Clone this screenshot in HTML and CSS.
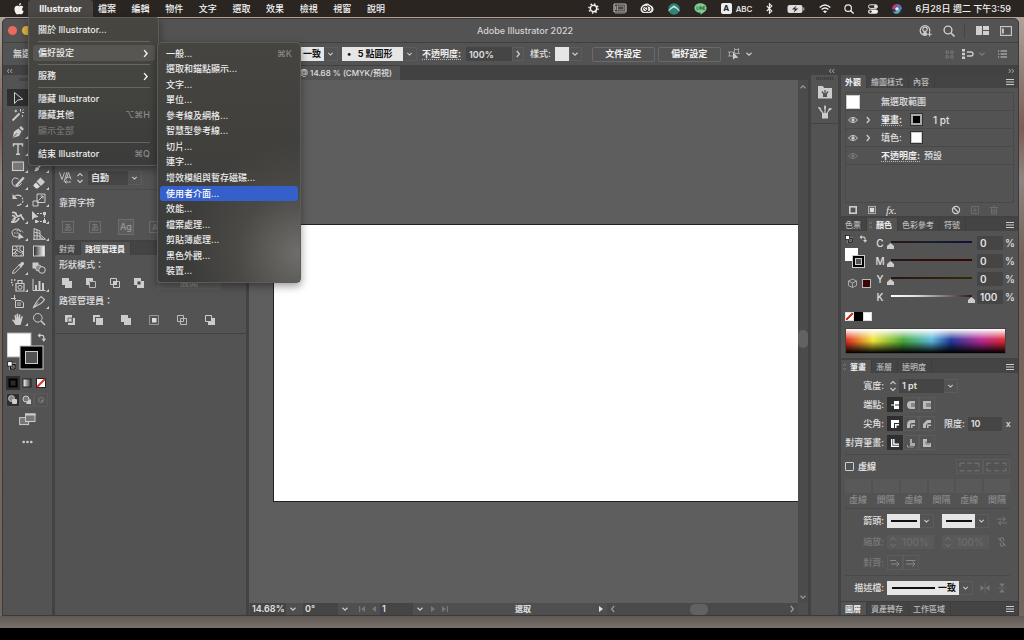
FILE: index.html
```html
<!DOCTYPE html>
<html lang="zh-Hant">
<head>
<meta charset="utf-8">
<title>Adobe Illustrator 2022</title>
<link rel="stylesheet" href="styles.css">
</head>
<body>
<svg class="defs" aria-hidden="true">
  <symbol id="chev" viewBox="0 0 8 8"><path d="M1.5 2.8 4 5.2 6.5 2.8" fill="none" stroke="currentColor" stroke-width="1.2"/></symbol>
  <symbol id="right" viewBox="0 0 8 8"><path d="M2.8 1 5.4 4 2.8 7" fill="none" stroke="currentColor" stroke-width="1.3"/></symbol>
  <symbol id="left" viewBox="0 0 8 8"><path d="M5.2 1 2.6 4 5.2 7" fill="none" stroke="currentColor" stroke-width="1.2"/></symbol>
  <symbol id="up" viewBox="0 0 8 8"><path d="M1.5 5.2 4 2.8 6.5 5.2" fill="none" stroke="currentColor" stroke-width="1.2"/></symbol>
  <symbol id="spin" viewBox="0 0 8 12"><path d="M1.5 4 4 1.6 6.5 4M1.5 8 4 10.4 6.5 8" fill="none" stroke="currentColor" stroke-width="1.1"/></symbol>
  <symbol id="dleft" viewBox="0 0 8 6"><path d="M3.2 1 1.4 3l1.8 2M6.2 1 4.4 3l1.8 2" fill="none" stroke="currentColor"/></symbol>
  <symbol id="dright" viewBox="0 0 8 6"><path d="M1.8 1l1.8 2-1.8 2M4.8 1l1.8 2-1.8 2" fill="none" stroke="currentColor"/></symbol>
  <symbol id="burger" viewBox="0 0 8 8"><path d="M0 1.5h8M0 4h8M0 6.5h8" stroke="currentColor" stroke-width="1"/></symbol>
  <symbol id="search" viewBox="0 0 12 12"><circle cx="5" cy="5" r="3.9" fill="none" stroke="currentColor" stroke-width="1.4"/><path d="M7.8 7.8 11.5 11.5" stroke="currentColor" stroke-width="1.6"/></symbol>
  <symbol id="swap" viewBox="0 0 10 10"><path d="M3 2.7h2.6q2 0 2 2V7" fill="none" stroke="currentColor" stroke-width="1.4"/><path d="M3.6 0v5.4L.6 2.7zM5 6.4h5.2L7.6 9.6z" fill="currentColor"/></symbol>
  <symbol id="defcol" viewBox="0 0 10 10"><rect x="4" y="4" width="5" height="5" fill="none" stroke="#ccc" stroke-width="2.6"/><rect x="4" y="4" width="5" height="5" fill="none" stroke="#000" stroke-width="1.4"/><rect x=".7" y=".7" width="5" height="5" fill="#fff" stroke="#222"/></symbol>
  <symbol id="eye" viewBox="0 0 10 8"><path d="M.5 4Q5-1.2 9.500 4 5 9.200.5 4z" fill="none" stroke="currentColor"/><circle cx="5" cy="4" r="1.7" fill="currentColor"/></symbol>
  <symbol id="prev" viewBox="0 0 8 8"><path d="M6 1v6L2 4z" fill="currentColor"/></symbol>
  <symbol id="next" viewBox="0 0 8 8"><path d="M2 1v6l4-3z" fill="currentColor"/></symbol>
  <symbol id="first" viewBox="0 0 8 8"><path d="M7 1v6L3 4zM1 1h1.200v6H1z" fill="currentColor"/></symbol>
  <symbol id="last" viewBox="0 0 8 8"><path d="M1 1v6l4-3zM5.800 1H7v6H5.800z" fill="currentColor"/></symbol>
  <symbol id="brushes" viewBox="0 0 14 14"><path d="M4 8h6v5.500H4z" fill="currentColor"/><path d="M5 8 2 4.500M7 8V2M9 8l2.500-3.500" stroke="currentColor" stroke-width="1.200"/><path d="M0 2q3-.5 3.400 3Q.8 5 0 2zM7 0q2 2 0 4.500Q5 2 7 0zM10.200 5.500Q10.500 2 14 3.500 13 6 10.200 5.500z" fill="currentColor"/></symbol>
</svg>

<header class="menubar">
  <button class="apple" aria-label="Apple"><svg width="10" height="12" viewBox="0 0 10 12"><path d="M5 3.200C4 2.700 3.400 2.600 2.700 2.800.9 3.300.2 5 .5 7c.3 2 1.500 4.400 2.900 4.400.7 0 1-.4 1.800-.4s1.100.4 1.800.4c1.200 0 2.200-1.700 2.600-2.900C7.700 7.500 7.700 5 9.300 4.100 8.600 3 7.300 2.500 6.200 2.900c-.5.1-.8.3-1.200.3zM4.900 2.600C4.800 1.300 5.800.2 7 .1 7.200 1.400 6.200 2.600 4.900 2.600z" fill="#f2f2f2"/></svg></button>
  <button class="app-name">Illustrator</button>
  <nav class="menus">
    <button>檔案</button><button>編輯</button><button>物件</button><button>文字</button><button>選取</button><button>效果</button><button>檢視</button><button>視窗</button><button>說明</button>
  </nav>
  <div class="status-items">
    <svg width="11" height="11" viewBox="0 0 12 12"><circle cx="6" cy="6" r="3.500" fill="none" stroke="#f2f2f2" stroke-width="1.600"/><circle cx="6" cy="6" r="5" fill="none" stroke="#f2f2f2" stroke-width="1.600" stroke-dasharray="1.600 2.327"/></svg>
    <svg width="14" height="11" viewBox="0 0 14 11"><rect x="1" y="1" width="12" height="8" rx="1" fill="#3a3634" stroke="#bbb" stroke-width="1.200"/><rect x="4.500" y="3" width="6.500" height="4" fill="#4a4644" stroke="#aaa" stroke-width=".8"/><path d="M2.800 3v4" stroke="#bbb"/><path d="M2 10.300h10" stroke="#888" stroke-width=".7"/></svg>
    <svg width="14" height="11" viewBox="0 0 14 11"><path d="M4 1.500Q7-.6 10 2q4 1.500 3.500 5Q12.500 10.300 9 10H4Q.6 9.500.5 6.200.7 3 4 1.500z" fill="#eee"/><circle cx="5.200" cy="6" r="2.700" fill="none" stroke="#2b2522" stroke-width="1"/><path d="M5 4.500Q7 2 9.500 3.300q2.200 1.500 1.300 4-1.600 2.200-3.600.7L4.500 5.300" fill="none" stroke="#2b2522" stroke-width="1"/></svg>
    <svg width="12" height="12" viewBox="0 0 12 12"><circle cx="6" cy="6" r="5.800" fill="#2f8577"/><path d="M.6 8Q3 5.500 6 4q3 1.500 5.400 4Q10 5 6 2.800 2 5 .6 8z" fill="#e8f4f0" stroke="#e8f4f0" stroke-width=".5"/></svg>
    <svg width="13" height="12" viewBox="0 0 13 12"><path d="M6.500.3C10 .3 12.600 2.500 12.600 5c0 2.800-3.300 5-6.100 6.800V9.800C3 9.700.4 7.700.4 5S3 .3 6.500.3z" fill="#80c992"/><path d="M3 3.500v3h1.300M5.300 3.500v3M6.500 6.500v-3l1.700 3v-3M11 3.500H9.500v3H11M9.500 5H11" fill="none" stroke="#2b5a39" stroke-width=".7"/></svg>
    <span class="ime"><b>A</b>ABC</span>
    <svg width="7" height="11" viewBox="0 0 7 11"><path d="M.8 3 5.800 8 3.400 10.300V.7L5.800 3 .8 8" fill="none" stroke="#eee" stroke-width="1.100"/></svg>
    <svg width="18" height="10" viewBox="0 0 18 10"><rect x=".5" y="1" width="15" height="8" rx="2" fill="#ddd"/><path d="M16.800 3.500v3" stroke="#bbb"/><path d="M9.500 1.500 5 5.500h3L6.500 8.700 11.200 4.500H8z" fill="#2b2522"/></svg>
    <svg width="12" height="10" viewBox="0 0 12 10"><path d="M.7 3.600Q6-1.400 11.300 3.600M2.600 5.600q3.400-3 6.800 0" fill="none" stroke="#f2f2f2" stroke-width="1.400"/><path d="M4 7.200q2-1.600 4 0L6 9.300z" fill="#f2f2f2"/></svg>
    <svg width="10" height="10" class="light"><use href="#search"/></svg>
    <svg width="10" height="10" viewBox="0 0 10 10"><rect x=".5" y=".8" width="9" height="3.600" rx="1.800" fill="none" stroke="#eee" stroke-width="1"/><circle cx="7.500" cy="2.600" r="1.500" fill="#eee"/><rect x="0" y="5.400" width="10" height="4.400" rx="2.200" fill="#eee"/><circle cx="2.500" cy="7.600" r="1.200" fill="#2b2522"/></svg>
    <svg width="10" height="10" viewBox="0 0 10 10"><circle cx="5" cy="5" r="5" fill="#3b3560"/><path d="M5 0a5 5 0 0 1 5 5L5 5.500z" fill="#4b78b8"/><path d="M0 5a5 5 0 0 1 5-5l.5 5.500z" fill="#b3426a"/><path d="M1 8q4 0 8-4-1 6-5 5.800Q2 9.600 1 8z" fill="#4bb3b5"/><circle cx="5" cy="5" r="1.800" fill="#e9e6f2"/></svg>
    <time>6月28日 週二 下午3:59</time>
  </div>
</header>

<main class="window">
  <div class="titlebar">
    <div class="lights"><i class="red"></i><i class="yellow"></i></div>
    <h1>Adobe Illustrator 2022</h1>
    <div class="title-tools">
      <button aria-label="帳號"><svg width="13" height="12" viewBox="0 0 13 12"><circle cx="6" cy="5.500" r="4.800" fill="none" stroke="#ccc" stroke-width="1.300"/><circle cx="6" cy="4.300" r="2.200" fill="none" stroke="#ccc" stroke-width="1.200"/><path d="M3 8.800Q5.300 8 4.900 6.500h2.200Q6.800 8 9 8.800L6 10.500z" fill="#ccc"/><path d="M8.200 6.800H13V12H8.200z" fill="#535353"/><path d="M10.500 7v4.600M8.200 9.300h4.600" stroke="#ccc" stroke-width="1.100"/></svg></button>
      <button aria-label="搜尋"><svg width="12" height="12"><use href="#search"/></svg></button>
      <i class="bar"></i>
      <button aria-label="排列文件"><svg width="13" height="9" viewBox="0 0 13 9"><path d="M0 0h6v9H0zM7 0h6v4H7zM7 5h6v4H7z" fill="#d0d0d0"/></svg></button>
      <button aria-label="工作區"><svg width="12" height="10" viewBox="0 0 12 10"><rect x=".6" y=".6" width="10.800" height="8.800" fill="none" stroke="#ccc" stroke-width="1.100"/><path d="M2 2.500h1.800v5H2z" fill="#ccc"/></svg></button>
    </div>
  </div>

  <div class="control">
    <span class="selection">無選</span>
    <div class="combo white profile"><select aria-label="變數寬度描述檔"><option>一致</option></select><svg><use href="#chev"/></svg></div>
    <div class="combo white brush"><select aria-label="筆刷"><option>•&nbsp;&nbsp; 5 點圓形</option></select><svg><use href="#chev"/></svg></div>
    <div class="opacity"><label class="dotted" for="op">不透明度:</label><input id="op" value="100%"><button aria-label="更多"><svg width="8" height="8"><use href="#right"/></svg></button></div>
    <div class="style-pick">樣式:<button class="sw" aria-label="樣式"></button><button class="drop" aria-label="樣式選單"><svg width="8" height="8"><use href="#chev"/></svg></button></div>
    <button class="outlined">文件設定</button>
    <button class="outlined">偏好設定</button>
    <button class="similar" aria-label="選取類似"><svg width="12" height="12" viewBox="0 0 12 12"><path d="M6.500 1.500h4v4h-4zM1.500 4h4v4h-4zM0 4h1.500M0 8h1.500M6.500 0v1.500M10.500 0v1.500M10.500 5.500H12" fill="none" stroke="#aaa" stroke-width=".9"/><path d="M5 4v7.700L6.800 10l3.600-.3z" fill="#ccc"/></svg><svg width="8" height="8"><use href="#chev"/></svg></button>
    <div class="control-end">
      <svg width="9" height="9" viewBox="0 0 9 9"><path d="M1 1h2.300v2.300H1zM5.700 1H8v2.300H5.700zM1 5.700h2.300V8H1zM5.700 5.700H8V8H5.700z" fill="none" stroke="#777"/></svg>
      <button aria-label="對齊至"><svg width="12" height="10" viewBox="0 0 12 10"><path d="M0 0h3v2.500H0zM0 3.700h3v2.500H0zM0 7.400h3V10H0z" fill="#ccc"/><path d="M5 3h4q2 0 2 2t-2 2H5" fill="none" stroke="#ccc" stroke-width="1.300"/></svg><svg width="8" height="8" class="dim"><use href="#chev"/></svg></button>
      <button aria-label="面板選單"><svg width="9" height="8" viewBox="0 0 9 8"><path d="M2.500 1H9M2.500 4H9M2.500 7H9M0 1h1.200M0 4h1.200M0 7h1.200" stroke="#ccc"/></svg></button>
    </div>
  </div>

  <div class="work">
    <aside class="tools">
      <div class="strip"><svg width="8" height="6"><use href="#dleft"/></svg></div>
      <div class="grip"></div>
      <div class="tool-grid">
        <button class="on" aria-label="選取"><svg viewBox="0 0 14 14"><path d="M3.500 1.500v11L6.800 9l5-.7z" fill="none" stroke="currentColor"/></svg></button>
        <button aria-label="直接選取"><svg viewBox="0 0 14 14"><path d="M4 2v10l3-3 4-.5z" fill="currentColor"/></svg></button>
        <button aria-label="魔術棒"><svg viewBox="0 0 14 14"><path d="M1.500 12.500 8.500 5.500" stroke="currentColor" stroke-width="1.800"/><path d="M9.500 1v2.600M13 4.500h-2M3.500 3h2.600M4.800 1.700v2.600M11.500 7v2M12.500 1.500 11.300 2.700" stroke="currentColor"/></svg></button>
        <button aria-label="套索"><svg viewBox="0 0 14 14"><ellipse cx="7" cy="6" rx="5" ry="3.500" fill="none" stroke="currentColor"/></svg></button>
        <button class="more" aria-label="鋼筆"><svg viewBox="0 0 14 14"><path d="M1.500 13 3 6.500 7.500 3.500l3 3L8 11zM8.300 2.700 10 1l3 3-1.700 1.700z" fill="currentColor"/><path d="M1.500 13 6 8.300" stroke="#535353"/></svg></button>
        <button aria-label="曲線"><svg viewBox="0 0 14 14"><path d="M2 12Q4 2 12 4" fill="none" stroke="currentColor"/></svg></button>
        <button class="more" aria-label="文字"><svg viewBox="0 0 14 14"><path d="M2.500 4.500V2h9v2.500M7 2v10.300M5 12.300h4" fill="none" stroke="currentColor" stroke-width="1.400"/></svg></button>
        <button aria-label="線段"><svg viewBox="0 0 14 14"><path d="M2 12 12 2" stroke="currentColor"/></svg></button>
        <button class="more" aria-label="矩形"><svg viewBox="0 0 14 14"><rect x="1.500" y="3" width="11" height="8.500" fill="#777" stroke="currentColor" stroke-width="1.100"/></svg></button>
        <button class="more" aria-label="繪圖筆刷"><svg viewBox="0 0 14 14"><path d="M12.500 1 6 7.500 7.500 9z" fill="currentColor"/><path d="M5.500 8q2 .5 1.500 2.500-2 2.500-5 1.500 1.800-1 1.500-3 .7-1 2-1z" fill="currentColor"/></svg></button>
        <button class="more" aria-label="形狀繪圖"><svg viewBox="0 0 14 14"><path d="M7.500 3.200Q2-.3 1 5.500q.3 5.800 6 4.800 2.500-1 3.500-3" fill="none" stroke="currentColor"/><path d="M12.800 1.500 6.800 8 5 9.800" stroke="currentColor" stroke-width="2.400"/></svg></button>
        <button class="more" aria-label="橡皮擦"><svg viewBox="0 0 14 14"><path d="M8.500 1.500 13 6l-4 4-4.500-4.500z" fill="currentColor"/><path d="M4 6.500 8 10.500 5.500 12.500H4L1.500 10V9z" fill="#ddd"/></svg></button>
        <button class="more" aria-label="旋轉"><svg viewBox="0 0 14 14"><path d="M3 3.500Q6 1 9.500 2.800q3.500 3 2 6.700-2 3-5.500 3" fill="none" stroke="currentColor" stroke-width="1.200" stroke-dasharray="8 1.300 2 1.300 2 1.300"/><path d="M1.500 1v5h5z" fill="currentColor"/></svg></button>
        <button class="more" aria-label="縮放"><svg viewBox="0 0 14 14"><path d="M1 8h5v5H1zM5 1h8v8.500H5zM6.500 7.500 11 3M8.500 3H11v2.500" fill="none" stroke="currentColor"/></svg></button>
        <button class="more" aria-label="寬度"><svg viewBox="0 0 14 14"><path d="M1 2.500Q5 2 5.500 5q1.500 2.500 4 0l3.500 5M1 5.500q3 0 3 2.500T.5 12Q6 13 8 8" fill="none" stroke="currentColor" stroke-width="1.700"/><path d="M1 9.500 11 4.500" stroke="currentColor"/></svg></button>
        <button class="more" aria-label="任意變形"><svg viewBox="0 0 14 14"><path d="M5 3.500h7.500v8H3" fill="none" stroke="currentColor" stroke-dasharray="2 1"/><path d="M0 1v9l2.500-2.300L6.500 7zM11 2h3v3h-3zM11 10h3v3h-3zM3 10h2.500v3H3z" fill="currentColor"/></svg></button>
        <button class="more" aria-label="形狀建立程式"><svg viewBox="0 0 14 14"><path d="M9.500 5Q9 1.500 5.500 2 1 2.500 1 6t4 4h3" fill="none" stroke="currentColor"/><path d="M3 6h5M5.500 4Q11 2.500 12.500 6" fill="none" stroke="currentColor" stroke-dasharray="1.500 1"/><path d="M7.500 5.500v7.500l2-1.800 3.500-.4z" fill="currentColor"/></svg></button>
        <button class="more" aria-label="透視格點"><svg viewBox="0 0 14 14"><path d="M2 1.500v11M2 1.500l6 2.500v8M2 5l6 1.500M2 8.800l6 .2M5 2.500V12M1 12.300h12.500L8 7.500M8 10l3 2" fill="none" stroke="currentColor"/></svg></button>
        <button aria-label="網格"><svg viewBox="0 0 14 14"><path d="M1.500 2h11v10h-11zM1.500 6q3.500-2 5.500 1t5.500 0M5 2q3 3 0 5t1 5M9.500 2q-2 4 1 5t-1 5M1.500 10q3-3 5 0" fill="none" stroke="currentColor"/></svg></button>
        <button aria-label="漸層"><svg viewBox="0 0 14 14"><defs><linearGradient id="g1"><stop stop-color="#222"/><stop offset="1" stop-color="#fff"/></linearGradient></defs><rect x="1.500" y="2" width="11" height="10" fill="url(#g1)" stroke="currentColor"/></svg></button>
        <button class="more" aria-label="檢色滴管"><svg viewBox="0 0 14 14"><path d="M1.500 12.500 2.200 10 8 4.200l1.800 1.800L4 11.800z" fill="none" stroke="currentColor"/><path d="M7 3 8.500 3.200 11 .8q2 0 2.200 2.200L10.800 5.500 11 7z" fill="currentColor"/></svg></button>
        <button aria-label="漸變"><svg viewBox="0 0 14 14"><path d="M.5 1.500h6v6h-6z" fill="currentColor"/><circle cx="6.500" cy="7" r="3" fill="#888" stroke="currentColor"/><circle cx="10" cy="9" r="3.300" fill="#535353" stroke="currentColor"/></svg></button>
        <button class="more" aria-label="符號噴灑器"><svg viewBox="0 0 14 14"><path d="M0 2h1.500M3 2h1.500M0 4.500h1.500M1 7h1.200" stroke="currentColor" stroke-width="1.300"/><path d="M5 5.500h8v7.500H5zM7 5.500V2.500h4v3" fill="none" stroke="currentColor" stroke-width="1.200"/><circle cx="9" cy="9.300" r="2" fill="none" stroke="currentColor"/></svg></button>
        <button class="more" aria-label="長條圖"><svg viewBox="0 0 14 14"><path d="M1 1v11.500h12.500" fill="none" stroke="currentColor"/><path d="M3 7h2v5H3zM6.500 3h2v9h-2zM10 5h2v7h-2z" fill="currentColor"/></svg></button>
        <button aria-label="工作區域"><svg viewBox="0 0 14 14"><path d="M3.500 0v5M0 3.500h5M4.500 5.500H10L12.500 8v4.500h-8z" fill="none" stroke="currentColor"/><path d="M6 7h4v4H6z" fill="#888"/></svg></button>
        <button class="more" aria-label="切片"><svg viewBox="0 0 14 14"><path d="M1.500 12.500Q3 8 9 1.500L12.500 4.500Q9.500 9 6 10z" fill="none" stroke="currentColor" stroke-width="1.100"/><path d="M1.500 12.500 6 7.500" stroke="currentColor"/></svg></button>
        <button class="more" aria-label="手形"><svg viewBox="0 0 14 14"><path d="M4.500 13Q3 10 1 8q.6-1.300 3 .5L3.500 3q1.300-.7 1.500 1l.5 2.500V2q1.300-1 1.600.3V6.500L8 2.500q1.300-.6 1.400.6L9.200 7l1.600-3q1.200-.2 1 1-.8 2-1.200 4.500L9.500 13z" fill="currentColor"/></svg></button>
        <button aria-label="縮放顯示"><svg viewBox="0 0 14 14"><circle cx="5.800" cy="5.800" r="4.300" fill="none" stroke="currentColor"/><path d="M9 9l4 4" stroke="currentColor" stroke-width="1.600"/></svg></button>
      </div>
      <svg class="fillstroke" viewBox="0 0 42 41"><rect x="0" y="1" width="24" height="24" fill="#fff" stroke="#aaa"/><rect x="13" y="14" width="23" height="23" fill="#000" stroke="#ccc"/><rect x="18.500" y="19.500" width="12" height="12" fill="#535353" stroke="#ccc"/><use href="#swap" x="30" y="1" width="9" height="9"/><use href="#defcol" x="0" y="29" width="9" height="9"/></svg>
      <div class="paint">
        <button class="on" aria-label="顏色"><svg viewBox="0 0 12 12"><rect x="2.500" y="2.500" width="7" height="7" fill="#2a2a2a" stroke="#000" stroke-width="2"/></svg></button>
        <button aria-label="漸層填色"><svg viewBox="0 0 12 12"><defs><linearGradient id="g2"><stop stop-color="#fff"/><stop offset="1" stop-color="#333"/></linearGradient></defs><rect x="2" y="2" width="8" height="8" fill="url(#g2)" stroke="#222"/></svg></button>
        <button aria-label="無"><svg viewBox="0 0 12 12"><rect x="1.500" y="1.500" width="9" height="9" fill="#fff" stroke="#222"/><path d="M2 10 10 2" stroke="#e22c1c" stroke-width="1.800"/></svg></button>
      </div>
      <div class="modes">
        <button class="on" aria-label="一般繪製"><svg viewBox="0 0 12 12"><circle cx="4.500" cy="4.500" r="3" fill="#888" stroke="#bbb"/><rect x="5" y="5" width="5" height="5" rx="1" fill="#ccc"/></svg></button>
        <button aria-label="繪製下層"><svg viewBox="0 0 12 12"><rect x="5.500" y="5.500" width="4.500" height="4.500" fill="#ccc"/><circle cx="5" cy="5" r="3" fill="#777" stroke="#ccc"/></svg></button>
        <button aria-label="繪製內側"><svg viewBox="0 0 12 12"><circle cx="6" cy="6" r="2.600" fill="none" stroke="#777"/><path d="M6 6h2v2H6z" fill="#777"/></svg></button>
      </div>
      <button class="screen" aria-label="變更螢幕模式"><svg width="17" height="13" viewBox="0 0 17 13"><rect x=".6" y="4.600" width="9" height="7" fill="#777" stroke="#ccc"/><rect x="6.500" y="1" width="9.500" height="7.500" fill="#777" stroke="#ccc"/><path d="M6 1.500h10.500" stroke="#ccc" stroke-width="2"/></svg></button>
      <button class="dots" aria-label="編輯工具列"><svg width="11" height="4" viewBox="0 0 11 4"><circle cx="1.700" cy="2" r="1.300" fill="#ccc"/><circle cx="5.500" cy="2" r="1.300" fill="#ccc"/><circle cx="9.300" cy="2" r="1.300" fill="#ccc"/></svg></button>
    </aside>

    <aside class="dock-left">
      <section class="char">
        <div class="kern">
          <svg width="13" height="13" viewBox="0 0 13 13"><path d="M.5 1.500 3 8.500 5.500 1.500M5 11 8 1M7 8.500 9.500 1.500 12 8.500M8 6.200h3M12 11H6M7.500 9.500 6 11l1.500 1.500" fill="none" stroke="#ccc" stroke-width=".9"/></svg>
          <svg width="8" height="12"><use href="#spin"/></svg>
          <div class="combo kernsel"><select aria-label="字距微調"><option>自動</option></select><svg><use href="#chev"/></svg></div>
        </div>
        <h2>靠齊字符</h2>
        <div class="glyphs"><button><span>あ</span></button><button><span>あ</span></button><button class="big"><span>Ag</span></button><button><span>A</span></button></div>
      </section>
      <section class="path">
        <div class="tabs"><button>對齊</button><button class="on">路徑管理員</button></div>
        <div class="path-body">
          <h2>形狀模式：</h2>
          <div class="shape-row">
            <button aria-label="聯集"><svg viewBox="0 0 12 12"><path d="M1 1h7v3h3v7H4V8H1z" fill="#ccc"/></svg></button>
            <button aria-label="減去上層"><svg viewBox="0 0 12 12"><path d="M1 1h7v3H4v4H1z" fill="#ccc"/><path d="M4.500 4.500h6v6h-6z" fill="none" stroke="#bbb"/></svg></button>
            <button aria-label="交集"><svg viewBox="0 0 12 12"><path d="M1.500 1.500h6v6h-6zM4.500 4.500h6v6h-6z" fill="none" stroke="#ccc"/><path d="M4 4h4v4H4z" fill="#ccc"/></svg></button>
            <button aria-label="差集"><svg viewBox="0 0 12 12"><path d="M1 1h7v3h3v7H4V8H1z" fill="#ccc"/><path d="M4.500 4.500h3v3h-3z" fill="#444"/></svg></button>
            <button class="expand">展開</button>
          </div>
          <h2>路徑管理員：</h2>
          <div class="finder-row">
            <button aria-label="分割"><svg viewBox="0 0 12 12"><path d="M1 1h7v7H1zM4 4h7v7H4z" fill="#ccc"/><path d="M3.500 8.500h5v-5M4 4h4v4H4z" fill="none" stroke="#555" stroke-width=".8"/></svg></button>
            <button aria-label="剪裁覆蓋範圍"><svg viewBox="0 0 12 12"><path d="M1 1h7v2H3v5H1zM4 4h7v7H4z" fill="#ccc"/></svg></button>
            <button aria-label="合併"><svg viewBox="0 0 12 12"><path d="M1 1h7v3h3v7H4V8H1z" fill="#ccc"/></svg></button>
            <button aria-label="裁切"><svg viewBox="0 0 12 12"><path d="M1.500 1.500h9v9h-9z" fill="none" stroke="#999"/><path d="M4 4h4.500v4.500H4z" fill="#ddd"/></svg></button>
            <button aria-label="外框"><svg viewBox="0 0 12 12"><path d="M1.500 1.500h6v6h-6zM4.500 4.500h6v6h-6z" fill="none" stroke="#bbb"/></svg></button>
            <button aria-label="依後置物件剪裁"><svg viewBox="0 0 12 12"><path d="M8 4h3v7H4V8h4z" fill="#ccc"/><path d="M1.500 1.500h6v6h-6z" fill="none" stroke="#ccc"/></svg></button>
          </div>
        </div>
      </section>
    </aside>

    <section class="doc">
      <div class="doctabs"><button>@ 14.68 % (CMYK/預視)</button></div>
      <div class="view">
        <div class="canvas"><div class="artboard"></div></div>
        <div class="vscroll"><svg><use href="#up"/></svg><i></i><svg><use href="#chev"/></svg></div>
      </div>
      <footer class="statusbar">
        <div class="combo zoom"><select aria-label="縮放比例"><option>14.68%</option></select><svg><use href="#chev"/></svg></div>
        <div class="combo angle"><select aria-label="旋轉檢視"><option>0°</option></select><svg><use href="#chev"/></svg></div>
        <button class="nav" aria-label="第一個"><svg><use href="#first"/></svg></button><button class="nav" aria-label="上一個"><svg><use href="#prev"/></svg></button>
        <div class="combo board"><select aria-label="工作區域"><option>1</option></select><svg><use href="#chev"/></svg></div>
        <button class="nav" aria-label="下一個"><svg><use href="#next"/></svg></button><button class="nav" aria-label="最後一個"><svg><use href="#last"/></svg></button>
        <div class="current">選取</div>
        <button class="nav lit" aria-label="狀態"><svg><use href="#next"/></svg></button>
        <div class="hscroll"><svg><use href="#left"/></svg><i></i><svg><use href="#right"/></svg></div>
      </footer>
    </section>

    <aside class="iconrail">
      <div class="strip end"><svg width="8" height="6"><use href="#dleft"/></svg></div>
      <div class="rail-group"><div class="grip"></div>
        <button aria-label="資料庫"><svg width="14" height="14" viewBox="0 0 14 14"><path d="M0 1h5l1 2h8v10.500H0z" fill="#ccc"/><path d="M5 8.500h4V12H5z" fill="#555"/><path d="M7 9V5M5.800 9 4 6.500M8.200 9 10 6.500" fill="none" stroke="#555" stroke-width="1.300"/></svg></button>
        <button aria-label="筆刷"><svg width="14" height="14"><use href="#brushes"/></svg></button>
      </div>
    </aside>

    <aside class="dock-right">
      <div class="strip end"><svg width="8" height="6"><use href="#dright"/></svg></div>
      <section>
        <div class="tabs"><button class="on">外觀</button><button>繪圖樣式</button><button>內容</button><svg class="pm"><use href="#burger"/></svg></div>
        <div class="appearance">
          <div class="list">
            <div class="arow head"><i class="thumb"></i><span>無選取範圍</span></div>
            <div class="arow"><svg class="eye"><use href="#eye"/></svg><svg class="tri"><use href="#right"/></svg><a href="#" class="dotted">筆畫:</a><i class="chip black"></i><span class="pt">1 pt</span></div>
            <div class="arow"><svg class="eye"><use href="#eye"/></svg><svg class="tri"><use href="#right"/></svg><span>填色:</span><i class="chip"></i></div>
            <div class="arow"><svg class="eye faint"><use href="#eye"/></svg><span class="tri"></span><a href="#" class="dotted">不透明度:</a><span>預設</span></div>
          </div>
          <div class="afoot">
            <button aria-label="新增筆畫"><svg viewBox="0 0 10 10"><rect x="1.800" y="1.800" width="6.400" height="6.400" fill="none" stroke="#ccc" stroke-width="1.600"/></svg></button>
            <button aria-label="新增填色"><svg viewBox="0 0 10 10"><rect x="1.500" y="1.500" width="7" height="7" fill="none" stroke="#aaa"/><rect x="2.800" y="2.800" width="4.400" height="4.400" fill="#ddd"/></svg></button>
            <button class="fx"><i>fx.</i></button>
            <span class="push"></span>
            <button aria-label="清除外觀"><svg viewBox="0 0 10 10"><circle cx="5" cy="5" r="3.600" fill="none" stroke="#ccc" stroke-width="1.200"/><path d="M2.500 2.500l5 5" stroke="#ccc" stroke-width="1.200"/></svg></button>
            <button aria-label="複製"><svg viewBox="0 0 10 10"><path d="M1.500 1.500h7v7h-7zM5 3v4M3 5h4" fill="none" stroke="#6c6c6c"/></svg></button>
            <button aria-label="刪除"><svg viewBox="0 0 10 10"><path d="M1 2.500h8M4 1h2M2.500 3v6h5V3M4.200 4v4M5.800 4v4" fill="none" stroke="#6c6c6c"/></svg></button>
          </div>
        </div>
      </section>

      <section>
        <div class="tabs"><button>色票</button><button class="on ud"><svg><use href="#spin"/></svg>顏色</button><button>色彩參考</button><button>符號</button><svg class="pm"><use href="#burger"/></svg></div>
        <div class="color">
          <div class="mix">
            <svg class="mini" viewBox="0 0 26 56"><use href="#defcol" x="0" y="1" width="8" height="8"/><use href="#swap" x="14" y="1" width="8" height="8"/><rect x="0" y="14" width="13" height="13" fill="#fff"/><rect x="7.500" y="21.500" width="12" height="12" fill="#000" stroke="#ccc"/><rect x="10.500" y="24.500" width="6" height="6" fill="#535353" stroke="#ccc"/><path d="M3.500 47 7.500 45l4 2v4.500l-4 2-4-2zM3.500 47l4 2 4-2M7.500 49v4.500" fill="none" stroke="#bbb" stroke-width=".8"/><rect x="17.500" y="45.500" width="8" height="8" fill="#3a0707" stroke="#bbb"/></svg>
            <div class="sliders">
              <label for="c">C</label><input type="range" id="c" class="rc" min="0" max="100" value="0"><input value="0" aria-label="C %"><span>%</span>
              <label for="m">M</label><input type="range" id="m" class="rm" min="0" max="100" value="0"><input value="0" aria-label="M %"><span>%</span>
              <label for="y">Y</label><input type="range" id="y" class="ry" min="0" max="100" value="0"><input value="0" aria-label="Y %"><span>%</span>
              <label for="k">K</label><input type="range" id="k" class="rk" min="0" max="100" value="100"><input value="100" aria-label="K %"><span>%</span>
            </div>
          </div>
          <div class="quick"><button class="none" aria-label="無"></button><button class="blk" aria-label="黑"></button><button class="wht" aria-label="白"></button></div>
          <div class="spectrum"></div>
        </div>
      </section>

      <section class="grow">
        <div class="tabs"><button class="on ud"><svg><use href="#spin"/></svg>筆畫</button><button>漸層</button><button>透明度</button><svg class="pm"><use href="#burger"/></svg></div>
        <div class="stroke">
          <div class="srow"><label for="w">寬度:</label><svg class="sp"><use href="#spin"/></svg><div class="combo weight"><select id="w"><option>1 pt</option></select><svg><use href="#chev"/></svg></div></div>
          <div class="srow"><span>端點:</span><div class="seg">
            <button class="on" aria-label="平端點"><svg viewBox="0 0 10 10"><path d="M4 1h5v3H4zM4 6h5v3H4z" fill="#fff"/><path d="M1 5h8M4.500 1v8" stroke="#fff"/></svg></button>
            <button aria-label="圓端點"><svg viewBox="0 0 10 10"><path d="M9 1H5Q1 1 1 5t4 4h4V6.500H5v-3h4z" fill="#bbb"/><path d="M5 5h4" stroke="#bbb"/></svg></button>
            <button aria-label="方端點"><svg viewBox="0 0 10 10"><path d="M9 1H1v8h8V6.500H4v-3h5z" fill="#bbb"/><path d="M4 5h5" stroke="#bbb"/></svg></button></div></div>
          <div class="srow"><span>尖角:</span><div class="seg">
            <button class="on" aria-label="尖角"><svg viewBox="0 0 10 10"><path d="M1 1h8v3H4v5H1zM5 5h4v1.500H6.500V9H5z" fill="#fff"/></svg></button>
            <button aria-label="圓角"><svg viewBox="0 0 10 10"><path d="M9 1H6Q1 1 1 6v3h3V6q0-2 2-2h3zM5 5.500h4V7H6.500v2H5z" fill="#bbb"/></svg></button>
            <button aria-label="斜角"><svg viewBox="0 0 10 10"><path d="M9 1H5L1 5v4h3V6l2-2h3zM5 5.500h4V7H6.500v2H5z" fill="#bbb"/></svg></button></div>
            <label class="lim" for="lim">限度:</label><input id="lim" value="10"><em>x</em></div>
          <div class="srow"><span>對齊筆畫:</span><div class="seg">
            <button class="on" aria-label="置中"><svg viewBox="0 0 10 10"><path d="M1 1h3.500v4.500H9V9H1z" fill="#fff"/><path d="M2.700 1v6.300H9" fill="none" stroke="#333" stroke-width=".8"/></svg></button>
            <button aria-label="內側"><svg viewBox="0 0 10 10"><path d="M4 1h2v4h3v3H4z" fill="#aaa"/><path d="M1.500 7v2H8" fill="none" stroke="#aaa" stroke-width=".8"/></svg></button>
            <button aria-label="外側"><svg viewBox="0 0 10 10"><path d="M1 1h4v4h4v4H1z" fill="#bbb"/><path d="M4 3v3h4" fill="none" stroke="#666" stroke-width=".8"/></svg></button></div></div>
          <hr>
          <div class="dashhead"><input type="checkbox" id="dash"><label for="dash">虛線</label>
            <div class="seg wide"><button aria-label="保留"><svg viewBox="0 0 22 10"><path d="M1 5V1h5M8.500 1h5M16 1h5v4M1 8v1h5M8.500 9h5M16 9h5V8" fill="none" stroke="#777"/></svg></button><button aria-label="對齊"><svg viewBox="0 0 22 10"><path d="M1 4V1h4M8.500 1h5M17 1h4v3M1 6v3h4M8.500 9h5M17 9h4V6" fill="none" stroke="#777"/></svg></button></div></div>
          <div class="dashes">
            <label><input disabled>虛線</label><label><input disabled>間隔</label><label><input disabled>虛線</label><label><input disabled>間隔</label><label><input disabled>虛線</label><label><input disabled>間隔</label>
          </div>
          <hr>
          <div class="srow tall"><span>箭頭:</span><div class="combo white arrow"><select aria-label="起點箭頭"><option></option></select><svg><use href="#chev"/></svg></div><div class="combo white arrow"><select aria-label="終點箭頭"><option></option></select><svg><use href="#chev"/></svg></div><svg class="ic" viewBox="0 0 10 10"><path d="M0 3h8M6 .8 8.500 3 6 5.200M10 7H2M4 4.800 1.500 7 4 9.200" fill="none" stroke="#777"/></svg></div>
          <div class="srow tall off"><span>縮放:</span><div class="pct"><svg class="sp"><use href="#spin"/></svg><input value="100%" disabled aria-label="起點縮放"></div><div class="pct"><svg class="sp"><use href="#spin"/></svg><input value="100%" disabled aria-label="終點縮放"></div><svg class="ic" viewBox="0 0 10 12"><path d="M3 5V2.500Q3 1 5 1t2 1.500V5M3 7v2.500Q3 11 5 11t2-1.500V7M0 1l10 10" fill="none" stroke="#888"/></svg></div>
          <div class="srow tall off"><span>對齊:</span><div class="seg"><button aria-label="延伸"><svg viewBox="0 0 10 10"><path d="M0 2.500h6M1 6h8M6.500 3.500 9 6 6.500 8.500" fill="none" stroke="#888"/></svg></button><button aria-label="終端"><svg viewBox="0 0 10 10"><path d="M0 2.500h9.500M0 6h8M6.500 3.500 9 6 6.500 8.500" fill="none" stroke="#888"/></svg></button></div></div>
          <hr>
          <div class="srow tall"><span>描述檔:</span><div class="combo white prof"><select aria-label="描述檔"><option>一致</option></select><svg><use href="#chev"/></svg></div><svg class="ic" viewBox="0 0 10 10"><path d="M.5 2v6L4 5zM9.500 2v6L6 5z" fill="#777"/><path d="M5 0v10" stroke="#777" stroke-width=".6"/></svg><svg class="ic" viewBox="0 0 10 10"><path d="M2 .5h6L5 4zM2 9.500h6L5 6z" fill="#777"/><path d="M1 5h8" stroke="#777" stroke-width=".6"/></svg></div>
        </div>
      </section>
      <div class="tabs foot"><button class="on">圖層</button><button>資產轉存</button><button>工作區域</button><svg class="pm"><use href="#burger"/></svg></div>
    </aside>
  </div>
</main>
<div class="desk"></div>

<div class="menu main-menu" role="menu">
  <button role="menuitem">關於 Illustrator...</button><hr>
  <button role="menuitem" class="open">偏好設定<svg><use href="#right"/></svg></button><hr>
  <button role="menuitem">服務<svg><use href="#right"/></svg></button><hr>
  <button role="menuitem">隱藏 Illustrator</button>
  <button role="menuitem">隱藏其他<kbd>⌥⌘H</kbd></button>
  <button role="menuitem" disabled>顯示全部</button><hr>
  <button role="menuitem">結束 Illustrator<kbd>⌘Q</kbd></button>
</div>
<div class="menu sub-menu" role="menu">
  <button role="menuitem">一般...<kbd>⌘K</kbd></button>
  <button role="menuitem">選取和錨點顯示...</button>
  <button role="menuitem">文字...</button>
  <button role="menuitem">單位...</button>
  <button role="menuitem">參考線及網格...</button>
  <button role="menuitem">智慧型參考線...</button>
  <button role="menuitem">切片...</button>
  <button role="menuitem">連字...</button>
  <button role="menuitem">增效模組與暫存磁碟...</button>
  <button role="menuitem" class="hot">使用者介面...</button>
  <button role="menuitem">效能...</button>
  <button role="menuitem">檔案處理...</button>
  <button role="menuitem">剪貼簿處理...</button>
  <button role="menuitem">黑色外觀...</button>
  <button role="menuitem">裝置...</button>
</div>
</body>
</html>
```
FILE: styles.css
```css
* { box-sizing: border-box; }
html, body { height: 100%; }
body {
  margin: 0;
  display: flex;
  flex-direction: column;
  overflow: hidden;
  color: #e0e0e0;
  font: 500 9px/12px Inter, "Noto Sans CJK TC", sans-serif;
  background: linear-gradient(#b9ada4, #8d7d74 12%, #7d5c56 20%, #8e8580 28%, #72625a 40%, #76645a 70%, #6f6660);
}
button, input, select { font: inherit; color: inherit; margin: 0; padding: 0; border: 0; background: none; border-radius: 0; min-width: 0; }
button { display: flex; align-items: center; justify-content: center; white-space: nowrap; }
svg { display: block; flex: none; color: #ccc; }
h1, h2 { margin: 0; font: inherit; }
hr { margin: 0; border: 0; }
.defs { position: absolute; width: 0; height: 0; }

/* system menu bar */
.menubar { flex: none; display: flex; align-items: stretch; height: 17px; padding-right: 13px; background: #2b2522; color: #f2f2f2; }
.apple { width: 28px; padding-left: 9px; }
.app-name { width: 65px; background: #4b4744; border-radius: 3px 3px 0 0; font-weight: 700; }
.menus { display: flex; justify-content: space-between; width: 287px; margin-left: 5px; }
.status-items { display: flex; align-items: center; justify-content: space-between; width: 423px; margin-left: auto; white-space: nowrap; }
.light { color: #f2f2f2; }
.ime { display: flex; align-items: center; gap: 4px; font-size: 8px; }
.ime b { width: 11px; height: 11px; border-radius: 2px; background: #eee; color: #222; text-align: center; line-height: 11px; }

/* application window */
.window { flex: 1; min-height: 0; display: flex; flex-direction: column; margin: 1px 5px 0 2px; border: 1px solid #3a3a3a; border-radius: 5px 5px 0 0; background: #535353; overflow: hidden; }
.titlebar { flex: none; display: grid; grid-template-columns: 1fr auto 1fr; align-items: center; height: 24px; padding: 0 6px 0 5px; border-bottom: 1px solid #404040; color: #d4d4d4; }
.titlebar h1 { padding-left: 30px; }
.lights { display: flex; gap: 5px; }
.lights i { width: 9px; height: 9px; border-radius: 50%; }
.red { background: #ec695e; }
.yellow { background: #e5b83f; }
.title-tools { display: flex; align-items: center; justify-content: flex-end; gap: 11px; }
.title-tools .bar { margin-left: -2px; }
.bar { width: 1px; height: 15px; background: #454545; }

.control { flex: none; display: flex; align-items: center; height: 23px; padding: 0 10px; border-bottom: 1px solid #404040; }
.selection { width: 238px; font-weight: 700; color: #ccc; }
.combo { display: flex; align-items: stretch; height: 14px; }
.combo select { appearance: none; flex: 1; padding: 0 3px; background: #454545; }
.combo svg { width: 14px; height: 100%; padding: 2px 3px; border: 1px solid #5c5c5c; border-left: 0; }
.white select { background: #e6e6e6; color: #111; font-weight: 700; }
.profile { width: 87px; }
.profile select { text-align: right; text-align-last: right; }
.brush { width: 75px; margin-left: 4px; }
.brush select { padding-left: 5px; }
.dotted { color: #eee; border-bottom: 1px dotted #bbb; text-decoration: none; font-weight: 700; line-height: 11px; }
.opacity { display: flex; align-items: center; margin-left: 5px; font-size: 9px; }
.opacity input { width: 46px; height: 14px; margin-left: 5px; padding: 0 3px; background: #454545; font-weight: 600; }
.opacity button { width: 12px; height: 14px; border: 1px solid #5c5c5c; }
.style-pick { display: flex; align-items: center; margin-left: 6px; }
.sw { width: 14px; height: 14px; margin-left: 4px; background: #e6e6e6; }
.drop { width: 13px; height: 14px; margin-right: 10px; border: 1px solid #5c5c5c; }
.outlined { width: 63px; height: 15px; margin-right: 3px; border: 1px solid #696969; border-radius: 2px; color: #f2f2f2; font-weight: 700; }
.similar { gap: 5px; margin-left: 4px; }
.control-end { display: flex; align-items: center; gap: 8px; margin-left: auto; padding-right: 1px; }
.control-end button { gap: 4px; }
.control-end button:last-child { margin-left: 4px; }
.dim { opacity: .35; }

.work { flex: 1; min-height: 0; display: flex; background: #424242; gap: 3px; }
.strip { flex: none; display: flex; align-items: center; height: 9px; padding: 0 3px; background: #424242; }
.strip svg { color: #aaa; }
.end { justify-content: flex-end; }
.grip { height: 3px; width: 18px; margin: 3px auto; background: repeating-linear-gradient(90deg, #404040 0 1px, #4b4b4b 1px 2px); }

/* tool column */
.tools { flex: none; width: 49px; display: flex; flex-direction: column; background: #535353; }
.tool-grid { display: grid; grid-template-columns: 21px 21px; grid-auto-rows: 17px; padding: 5px 0 0 4px; }
.tool-grid button { position: relative; }
.tool-grid svg { width: 14px; height: 14px; }
.tools .on { background: #2f2f2f; }
.more::after { content: ""; position: absolute; right: 0; bottom: 1px; width: 3px; height: 3px; background: #ccc; clip-path: polygon(100% 0, 100% 100%, 0 100%); }
.fillstroke { width: 42px; height: 41px; margin: 5px 0 0 4px; }
.paint, .modes { display: grid; grid-template-columns: repeat(3, 14px); height: 14px; margin: 3px 0 0 3px; }
.paint svg, .modes svg { width: 12px; height: 12px; }
.modes button { outline: 1px solid #5a5a5a; outline-offset: -1px; }
.screen { margin-top: 5px; height: 14px; }
.dots { margin-top: 12px; height: 8px; }

/* left panels */
.dock-left { flex: none; width: 191px; background: #535353; }
.char { height: 176px; display: flex; flex-direction: column; justify-content: flex-end; padding: 0 4px 5px; border-bottom: 2px solid #424242; }
.kern { display: flex; align-items: center; gap: 4px; height: 20px; border-bottom: 1px solid #494949; padding-bottom: 4px; font-weight: 700; }
.kernsel { width: 54px; }
.char h2 { margin: 7px 0 9px; }
.glyphs { display: flex; align-items: center; gap: 15px; height: 17px; padding-left: 3px; }
.glyphs button { width: 12px; height: 12px; border: 1px solid #6c6c6c; color: #7a7a7a; font-size: 8px; }
.glyphs .big { width: 16px; height: 16px; margin-left: 2px; color: #999; background: #5c5c5c; font-size: 9px; }
.tabs { flex: none; display: flex; align-items: stretch; height: 13px; background: #444; font-size: 8px; color: #bbb; }
.tabs button { padding: 0 5px 0 4px; border-right: 1px solid #3e3e3e; }
.tabs .on { background: #535353; color: #f2f2f2; font-weight: 700; }
.tabs .pm { width: 8px; height: 8px; margin: 3px 4px 0 auto; }
.tabs .ud { padding-left: 1px; }
.ud svg { width: 5px; height: 8px; margin-right: 3px; color: #999; }
.path { border-bottom: 1px solid #424242; padding-bottom: 6px; }
.path-body { padding: 4px 4px 0; }
.shape-row, .finder-row { display: flex; align-items: center; height: 14px; }
.shape-row { gap: 12px; margin: 5px 0; padding-left: 2px; }
.finder-row { gap: 16px; margin-top: 6px; padding-left: 5px; }
.path-body svg { width: 12px; height: 12px; }
.expand { width: 64px; height: 14px; background: #5a5a5a; color: #888; }

/* document */
.doc { flex: 1; min-width: 0; display: flex; flex-direction: column; }
.doctabs { flex: none; display: flex; height: 14px; }
.doctabs button { width: 151px; padding-right: 8px; justify-content: flex-end; background: #535353; font-size: 8px; }
.view { flex: 1; min-height: 0; display: flex; }
.canvas { flex: 1; display: flex; padding: 144px 0 101px 24px; background: #5e5e5e; }
.artboard { flex: 1; background: #fff; border: 1px solid #222; border-right: 0; }
.vscroll { width: 10px; display: flex; flex-direction: column; align-items: center; justify-content: space-between; padding: 3px 0 2px; background: #4b4b4b; }
.vscroll svg, .hscroll svg, .nav svg { width: 8px; height: 8px; color: #999; }
.vscroll i { width: 10px; height: 18px; margin-bottom: 6px; border-radius: 5px; background: #626262; }
.statusbar { flex: none; display: flex; align-items: center; height: 12px; background: #4f4f4f; font-weight: 600; }
.statusbar .combo { height: 12px; }
.statusbar .combo select { padding: 0 2px; }
.statusbar .combo svg { border: 0; padding: 2px 3px; }
.zoom { width: 51px; padding-left: 1px; }
.angle { width: 49px; margin-left: 3px; }
.nav { width: 12px; }
.nav svg { color: #777; }
.nav.lit svg { color: #e0e0e0; }
.angle + .nav { margin-left: 4px; }
.board { width: 47px; }
.current { flex: 1; text-align: center; font-size: 8px; }
.hscroll { display: flex; align-items: center; justify-content: space-between; width: 191px; height: 12px; margin-right: 10px; padding: 0 2px; background: #4a4a4a; }
.hscroll i { width: 18px; height: 11px; margin-right: 8px; border-radius: 5px; background: #626262; }

.iconrail { flex: none; width: 27px; background: #535353; }
.rail-group { display: flex; flex-direction: column; align-items: center; gap: 6px; padding-bottom: 4px; border-bottom: 1px solid #424242; }
.rail-group .grip { margin: 2px 0 -1px; }
.iconrail .strip { padding: 0 2px; }

/* right panels */
.dock-right { flex: none; width: 177px; display: flex; flex-direction: column; background: #535353; }
.appearance { padding: 4px 4px 0; border-bottom: 2px solid #424242; }
.list { height: 111px; border: 1px solid #494949; }
.arow { display: flex; align-items: center; height: 18px; border-bottom: 1px solid #494949; padding-left: 2px; }
.arow .eye { width: 10px; height: 8px; }
.faint { opacity: .3; }
.tri { width: 8px; height: 8px; margin: 0 9px 0 6px; }
.thumb { width: 12px; height: 12px; margin: 0 22px 0 -1px; background: #fff; outline: 1px solid #ccc; }
.chip { width: 11px; height: 11px; margin: 0 11px 0 9px; background: #fff; border: 1px solid #ccc; outline: 1px solid #333; }
.chip.black { background: #000; border: 2px solid #aaa; }
.pt { font-size: 10px; }
.arow a + span { margin-left: 4px; }
.afoot { display: flex; align-items: center; gap: 9px; height: 13px; padding: 0 15px 0 3px; }
.afoot svg { width: 10px; height: 10px; }
.fx { font: italic 11px/12px "Liberation Serif", serif; }
.push { flex: 1; }

.color { padding: 3px 4px 4px; border-bottom: 2px solid #424242; }
.mix { display: flex; gap: 4px; }
.mini { width: 26px; height: 56px; }
.sliders { flex: 1; display: grid; grid-template-columns: 10px 1fr 26px 9px; grid-auto-rows: 18px; align-items: center; column-gap: 2px; font-size: 10px; }
.sliders input { height: 14px; padding: 0 3px; background: #454545; width: 100%; font-weight: 600; }
.sliders label { text-align: center; }
.sliders input[type="range"] { appearance: none; height: 12px; padding: 0; background: none; }
.sliders [type="range"]::-webkit-slider-runnable-track { height: 12px; background: var(--ramp) center 4px / calc(100% - 7px) 2px no-repeat; }
.sliders [type="range"]::-webkit-slider-thumb { appearance: none; width: 7px; height: 6px; margin-top: 6px; background: #ccc; clip-path: polygon(50% 0, 100% 50%, 100% 100%, 0 100%, 0 50%); }
.rc { --ramp: linear-gradient(90deg, #2a1515, #17202b 50%, #10103a); }
.rm { --ramp: linear-gradient(90deg, #2a1515, #350808); }
.ry { --ramp: linear-gradient(90deg, #2a1515, #322a05); }
.rk { --ramp: linear-gradient(90deg, #fff, #e0e0e0 30%, #2d1a1a); }
.quick { display: flex; margin-top: 6px; height: 9px; }
.quick button { width: 9px; border: 1px solid #ddd; }
.quick .none { background: linear-gradient(135deg, #fff 40%, #e22c1c 40% 60%, #fff 60%); }
.quick .blk { background: #000; border-color: #000; }
.quick .wht { background: #fff; }
.spectrum { height: 26px; width: 161px; margin-top: 7px; border: 1px solid #444; background: linear-gradient(#fff, #fff0 45%, #0000 50%, #000), linear-gradient(90deg, #e02a20, #f0e53a 17%, #4aa83a 36%, #5bb9dd 54%, #22399a 66%, #b82a94 85%, #e02a30); }

.grow { flex: 1; }
.stroke { padding: 3px 4px 0 4px; }
.stroke hr { height: 1px; margin: 2px 4px 1px 0; background: #494949; }
.srow { display: flex; align-items: center; height: 19px; }
.srow.tall { height: 21px; }
.srow > span:first-child, .srow > label:first-child { width: 39px; margin-right: 3px; text-align: right; white-space: nowrap; flex: none; }
.sp { width: 12px; height: 12px; padding: 0 2px; }
.weight { width: 59px; font-weight: 600; }
.seg { display: flex; }
.seg button { width: 16px; height: 15px; border: 1px solid #5c5c5c; }
.seg .on { background: #2f2f2f; border-color: #2f2f2f; }
.seg svg { width: 10px; height: 10px; }
.lim { margin: 0 3px 0 9px; }
.srow #lim { width: 34px; height: 14px; padding: 0 3px; background: #454545; font-weight: 600; }
.srow em { margin-left: 4px; font-style: normal; }
.dashhead { display: flex; align-items: center; height: 21px; font-weight: 700; }
.dashhead input { appearance: none; width: 9px; height: 9px; margin-right: 4px; border: 1px solid #ccc; border-radius: 1px; }
.wide { margin-left: auto; margin-right: 4px; }
.seg.wide button { width: 27px; }
.wide svg { width: 21px; }
.dashes { display: grid; grid-template-columns: repeat(6, 1fr); column-gap: 2px; margin: 2px 4px 0 0; color: #8a8a8a; text-align: center; }
.dashes label { display: flex; flex-direction: column; align-items: center; }
.dashes input { width: 100%; height: 14px; margin-bottom: 1px; background: #595959; }
.arrow { width: 47px; margin-right: 8px; }
.arrow select { background: linear-gradient(#111, #111) center / 26px 2px no-repeat #e6e6e6; }
.ic { width: 10px; height: 10px; margin-right: 7px; }
.off { color: #7a7a7a; }
.off svg { color: #6c6c6c; }
.pct { display: flex; align-items: center; width: 47px; height: 14px; margin-right: 8px; background: #595959; }
.pct input { width: 34px; color: #6c6c6c; padding-left: 3px; font-size: 10px; }
.prof { width: 86px; margin-right: 7px; }
.prof select { text-align: right; text-align-last: right; background: linear-gradient(#111, #111) 5px 50% / 43px 2px no-repeat #e6e6e6; }
.foot { height: 14px; border-top: 1px solid #3e3e3e; }

.desk { flex: none; height: 24px; border-bottom: 12px solid #000; background: linear-gradient(#5f5854, #7a716b); }

/* open menus */
.menu { position: absolute; display: flex; flex-direction: column; color: #ececec; border: 1px solid #5c5b58; border-radius: 4px; box-shadow: 0 3px 9px #0006; }
.menu button { justify-content: flex-start; padding: 0 5px; border-radius: 3px; }
.menu button svg { width: 9px; height: 9px; margin-left: auto; color: #f2f2f2; }
.menu kbd { margin-left: auto; color: #8a8a88; font: inherit; }
.menu button:disabled { color: #757472; }
.main-menu { left: 28px; top: 17px; width: 131px; padding: 4px 3px 3px 4px; background: linear-gradient(#47463f, #444440 40%, #3b3b3b); border-radius: 0 3px 4px 4px; }
.main-menu button { height: 16px; }
.main-menu hr { height: 1px; margin: 3px 5px; background: #666560; }
.main-menu .open { background: #575652; }
.sub-menu { left: 157px; top: 42px; width: 144px; height: 241px; padding: 3px 2px; background: radial-gradient(circle at 100% 88%, #706e6b, #4a4946 25%, transparent 45%), linear-gradient(#454440, #3a3a39); }
.sub-menu button { flex: 1; padding: 0 6px; }
.sub-menu .hot { background: #3560cc; color: #fff; }
```
